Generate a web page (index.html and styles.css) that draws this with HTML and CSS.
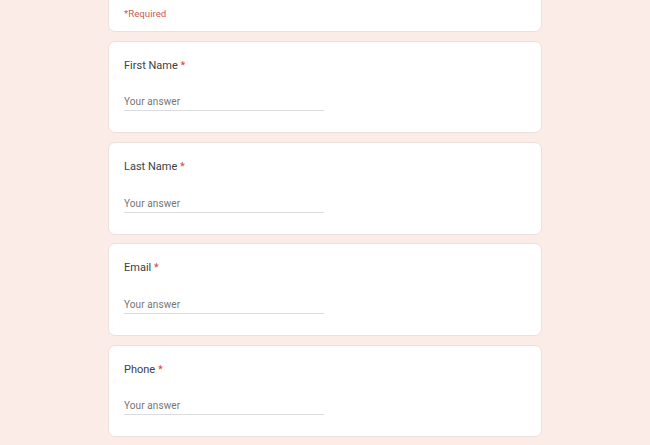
FILE: index.html
```html
<!DOCTYPE html>
<html>
<head>
<meta charset="utf-8">
<link rel="stylesheet" href="styles.css">
</head>
<body>
<div class="form">
  <div class="card head">
    <div class="req">*Required</div>
  </div>
  <div class="card q">
    <div class="label">First Name <span class="star">*</span></div>
    <div class="input">Your answer</div>
  </div>
  <div class="card q">
    <div class="label">Last Name <span class="star">*</span></div>
    <div class="input">Your answer</div>
  </div>
  <div class="card q">
    <div class="label">Email <span class="star">*</span></div>
    <div class="input">Your answer</div>
  </div>
  <div class="card q">
    <div class="label">Phone <span class="star">*</span></div>
    <div class="input">Your answer</div>
  </div>
</div>
</body>
</html>
```
FILE: styles.css
```css
html, body {
  margin: 0;
  padding: 0;
  background: #fcece8;
  font-family: Roboto, "Liberation Sans", sans-serif;
}
.form {
  width: 434px;
  margin-left: 108px;
  display: flex;
  flex-direction: column;
  gap: 8.8px;
}
.card {
  background: #fff;
  border: 1px solid #eddfdb;
  border-radius: 7px;
  box-sizing: border-box;
  padding: 0 15px;
}
.head {
  margin-top: -19.5px;
  height: 51.5px;
  padding-top: 25px;
}
.req {
  color: #d05a52;
  font-size: 9.7px;
  line-height: 14px;
}
.q {
  height: 92.5px;
  padding-top: 16px;
}
.label {
  font-size: 11px;
  line-height: 16px;
  color: #3c4043;
}
.star {
  color: #d9473d;
}
.input {
  margin-top: 19.5px;
  width: 200px;
  font-size: 10px;
  line-height: 17px;
  color: #757575;
  letter-spacing: 0.1px;
  border-bottom: 1px solid #dadce0;
}
```
